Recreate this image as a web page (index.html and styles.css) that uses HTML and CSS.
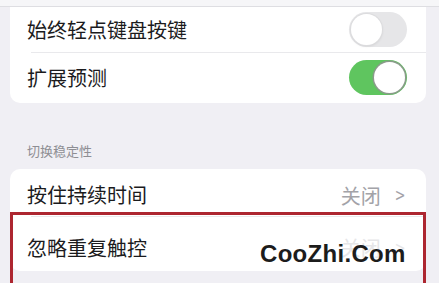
FILE: index.html
```html
<!DOCTYPE html>
<html lang="zh">
<head>
<meta charset="utf-8">
<link rel="stylesheet" href="styles.css">
</head>
<body>
<div class="page">
  <div class="top-strip"></div>
  <div class="card card-first">
    <div class="row row-a">
      <span class="label">始终轻点键盘按键</span>
      <span class="toggle off"><span class="knob"></span></span>
    </div>
    <div class="row row-b sep">
      <span class="label">扩展预测</span>
      <span class="toggle on"><span class="knob"></span></span>
    </div>
  </div>
  <div class="section-title">切换稳定性</div>
  <div class="card card-second">
    <div class="row row-c">
      <span class="label">按住持续时间</span>
      <span class="value">关闭<span class="chev">&gt;</span></span>
    </div>
    <div class="row row-d sep">
      <span class="label">忽略重复触控</span>
      <span class="value faded">关闭<span class="chev">&gt;</span></span>
    </div>
  </div>
  <div class="highlight"></div>
  <div class="watermark">CooZhi.Com</div>
</div>
</body>
</html>
```
FILE: styles.css
```css
html, body {
  margin: 0;
  padding: 0;
}
body {
  background: #f0eff4;
  font-family: "Noto Sans CJK SC", "Noto Sans", sans-serif;
  color: #1b1b1d;
  width: 439px;
  height: 283px;
  overflow: hidden;
}
.page {
  position: relative;
  height: 283px;
}
.top-strip {
  height: 6px;
  background: #f6f6f8;
  border-bottom: 1px solid #dedee2;
}
.card {
  margin: 0 13px 0 10px;
  background: #ffffff;
  border-radius: 10px;
}
.card-first {
  border-radius: 0 0 10px 10px;
}
.row {
  display: flex;
  align-items: center;
  justify-content: space-between;
  padding: 0 19px 0 17px;
  position: relative;
  box-sizing: border-box;
}
.row-a { height: 45px; }
.row-b { height: 51px; }
.row-c { height: 47px; padding-top: 5px; }
.row-d { height: 55px; padding-top: 8px; }
.sep::before {
  content: "";
  position: absolute;
  top: 0;
  left: 21px;
  right: 0;
  height: 1px;
  background: #e9e9ec;
}
.label {
  font-size: 20px;
  line-height: 1;
}
.toggle {
  width: 58px;
  height: 35px;
  border-radius: 18px;
  position: relative;
  box-sizing: border-box;
}
.toggle.off {
  background: #e6e6e8;
}
.toggle.on {
  background: #5fc55f;
}
.knob {
  position: absolute;
  top: 2px;
  width: 31px;
  height: 31px;
  border-radius: 50%;
  background: #fff;
  box-shadow: 0 1px 3px rgba(0,0,0,0.18);
}
.toggle.off .knob { left: 2px; box-shadow: 0 0 0 1px #dcdcde, 0 1px 3px rgba(0,0,0,0.12); }
.toggle.on .knob { right: 2px; box-shadow: 0 0 0 1.5px #8a9a8a; }
.section-title {
  padding: 39px 0 9px 27px;
  font-size: 13px;
  color: #8e8e93;
  line-height: 18px;
}
.value {
  font-size: 20px;
  color: #a3a3a8;
  display: flex;
  align-items: center;
}
.value.faded { color: #e6e6e8; }
.chev {
  font-family: "DejaVu Sans", sans-serif;
  font-size: 17px;
  margin-left: 12px;
  transform: scaleX(0.75);
}
.highlight {
  position: absolute;
  left: 10px;
  top: 212px;
  width: 416px;
  height: 80px;
  border: 3px solid #ad2630;
  box-sizing: border-box;
}
.watermark {
  position: absolute;
  left: 260px;
  top: 239px;
  font-family: "Liberation Sans", Arial, sans-serif;
  font-weight: bold;
  font-size: 24px;
  letter-spacing: 0.3px;
  color: #1c1c1c;
  line-height: 30px;
}
```
